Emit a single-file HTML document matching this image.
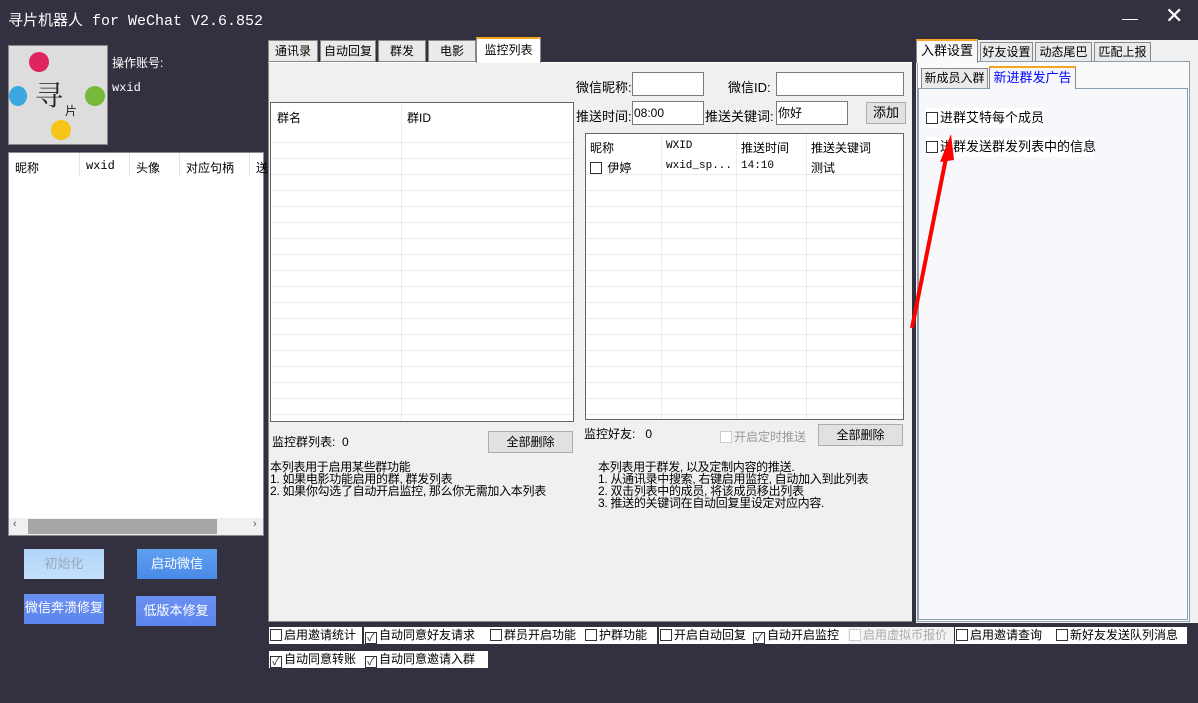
<!DOCTYPE html>
<html><head><meta charset="utf-8">
<style>
*{box-sizing:border-box;margin:0;padding:0}
body{width:1198px;height:703px;background:#33313f;position:relative;overflow:hidden;font-family:"Liberation Sans","Noto Sans CJK SC",sans-serif;font-size:12px;color:#000}
.a{position:absolute;white-space:nowrap}
.w{color:#fff}
.tab{position:absolute;height:22px;border:1px solid #888;background:#eaeaea;font-size:12px;line-height:20px;text-align:center;white-space:nowrap}
.inp{position:absolute;background:#fff;border:1px solid #7a7a7a;font-size:12px;line-height:22px;padding-left:1px}
.btn{position:absolute;background:#e1e1e1;border:1px solid #adadad;text-align:center;font-size:12px}
.cb{display:inline-block;width:12px;height:12px;border:1px solid #333;background:#fff;vertical-align:-2px;margin-right:2px;font-size:11px;line-height:10px;text-align:center;color:#333}
.chk{position:absolute;background:#fff;height:17px;line-height:17px;font-size:12px;padding-left:1px;white-space:nowrap;overflow:hidden}
.row{position:absolute;left:0;right:0;height:1px;background:#ececec}
.blue{position:absolute;color:#fff;text-align:center;font-size:13px;background:linear-gradient(#5fa0f0,#4a8ae8)}
</style></head><body>
<div class="a w" style="left:8px;top:9px;font-size:15px;font-family:'Liberation Mono','Noto Sans CJK SC',monospace">寻片机器人 for WeChat V2.6.852</div>
<div class="a" style="left:1122px;top:19px;width:16px;height:1px;background:#fff"></div>
<div class="a w" style="left:1165px;top:4px;font-size:22px;font-family:'DejaVu Sans'">✕</div>
<div class="a" style="left:8px;top:45px;width:100px;height:100px;background:#ddd;border:1px solid #888;overflow:hidden">
<div class="a" style="left:20px;top:6px;width:20px;height:20px;border-radius:50%;background:#e0245e"></div>
<div class="a" style="left:0;top:40px;width:18px;height:20px;border-radius:50%;background:#3aa7e0"></div>
<div class="a" style="left:76px;top:40px;width:20px;height:20px;border-radius:50%;background:#7ab83a"></div>
<div class="a" style="left:42px;top:74px;width:20px;height:20px;border-radius:50%;background:#f5c518"></div>
<div class="a" style="left:26px;top:28px;font-size:28px;font-family:'Noto Serif CJK SC',serif;color:#222">寻</div>
<div class="a" style="left:56px;top:56px;font-size:12px;color:#222">片</div>
</div>
<div class="a w" style="left:112px;top:54px">操作账号:</div>
<div class="a w" style="left:112px;top:81px;font-family:'Liberation Mono',monospace">wxid</div>
<div class="a" style="left:8px;top:152px;width:256px;height:384px;background:#fff;border:1px solid #888">
<div class="a" style="left:6px;top:6px">昵称</div>
<div class="a" style="left:70px;top:0;width:1px;height:24px;background:#e5e5e5"></div>
<div class="a" style="left:77px;top:6px;font-family:'Liberation Mono',monospace">wxid</div>
<div class="a" style="left:120px;top:0;width:1px;height:24px;background:#e5e5e5"></div>
<div class="a" style="left:127px;top:6px">头像</div>
<div class="a" style="left:170px;top:0;width:1px;height:24px;background:#e5e5e5"></div>
<div class="a" style="left:177px;top:6px">对应句柄</div>
<div class="a" style="left:240px;top:0;width:1px;height:24px;background:#e5e5e5"></div>
<div class="a" style="left:247px;top:6px">送</div>
<div class="a" style="left:0;top:365px;width:254px;height:17px;background:#f0f0f0"></div>
<div class="a" style="left:19px;top:366px;width:189px;height:15px;background:#a6a6a6"></div>
<div class="a" style="left:4px;top:365px;font-size:11px;color:#555">‹</div>
<div class="a" style="left:244px;top:365px;font-size:11px;color:#555">›</div>
</div>
<div class="blue" style="left:24px;top:549px;width:80px;height:30px;line-height:30px;background:linear-gradient(#b0d4f8,#c4e0fc);color:#9aa8b8">初始化</div>
<div class="blue" style="left:137px;top:549px;width:80px;height:30px;line-height:30px">启动微信</div>
<div class="blue" style="left:24px;top:594px;width:80px;height:30px;line-height:28px;background:linear-gradient(#6a90f0,#5c86ee)">微信奔溃修复</div>
<div class="blue" style="left:136px;top:596px;width:80px;height:30px;line-height:30px;background:linear-gradient(#6a90f0,#5c86ee)">低版本修复</div>
<div class="tab" style="left:268px;top:40px;width:50px">通讯录</div>
<div class="tab" style="left:320px;top:40px;width:56px">自动回复</div>
<div class="tab" style="left:378px;top:40px;width:48px">群发</div>
<div class="tab" style="left:428px;top:40px;width:48px">电影</div>
<div class="tab" style="left:476px;top:37px;width:65px;height:26px;background:#fff;border-top:2px solid #f5a623;border-bottom:none;z-index:2;line-height:22px">监控列表</div>
<div class="a" style="left:268px;top:62px;width:645px;height:560px;background:#f0f0f0;border:1px solid #888;border-top-color:#fff"></div>
<div class="a" style="left:576px;top:77px;font-size:13px">微信昵称:</div>
<div class="inp" style="left:632px;top:72px;width:72px;height:24px"></div>
<div class="a" style="left:728px;top:77px;font-size:13px">微信ID:</div>
<div class="inp" style="left:776px;top:72px;width:128px;height:24px"></div>
<div class="a" style="left:576px;top:106px;font-size:13px">推送时间:</div>
<div class="inp" style="left:632px;top:101px;width:72px;height:24px">08:00</div>
<div class="a" style="left:705px;top:106px;font-size:13px">推送关键词:</div>
<div class="inp" style="left:776px;top:101px;width:72px;height:24px">你好</div>
<div class="btn" style="left:866px;top:102px;width:40px;height:22px;line-height:20px;font-size:13px">添加</div>
<div class="a" style="left:270px;top:102px;width:304px;height:320px;background:#fff;border:1px solid #666;overflow:hidden">
<div class="a" style="left:6px;top:6px">群名</div>
<div class="a" style="left:130px;top:0;width:1px;height:320px;background:#ececec"></div>
<div class="a" style="left:136px;top:6px">群ID</div>
<div class="row" style="top:39px"></div><div class="row" style="top:55px"></div><div class="row" style="top:71px"></div><div class="row" style="top:87px"></div><div class="row" style="top:103px"></div><div class="row" style="top:119px"></div><div class="row" style="top:135px"></div><div class="row" style="top:151px"></div><div class="row" style="top:167px"></div><div class="row" style="top:183px"></div><div class="row" style="top:199px"></div><div class="row" style="top:215px"></div><div class="row" style="top:231px"></div><div class="row" style="top:247px"></div><div class="row" style="top:263px"></div><div class="row" style="top:279px"></div><div class="row" style="top:295px"></div><div class="row" style="top:311px"></div>
</div>
<div class="a" style="left:585px;top:133px;width:319px;height:287px;background:#fff;border:1px solid #666;overflow:hidden">
<div class="a" style="left:4px;top:5px;font-size:12px">昵称</div>
<div class="a" style="left:75px;top:0;width:1px;height:287px;background:#ececec"></div>
<div class="a" style="left:80px;top:6px;font-family:'Liberation Mono',monospace;font-size:11px">WXID</div>
<div class="a" style="left:150px;top:0;width:1px;height:287px;background:#ececec"></div>
<div class="a" style="left:155px;top:5px;font-size:12px">推送时间</div>
<div class="a" style="left:220px;top:0;width:1px;height:287px;background:#ececec"></div>
<div class="a" style="left:225px;top:5px;font-size:12px">推送关键词</div>
<div class="a" style="left:4px;top:25px;font-size:12px"><span class="cb"></span> 伊婷</div>
<div class="a" style="left:80px;top:26px;font-family:'Liberation Mono',monospace;font-size:11px">wxid_sp...</div>
<div class="a" style="left:155px;top:26px;font-family:'Liberation Mono',monospace;font-size:11px">14:10</div>
<div class="a" style="left:225px;top:25px;font-size:12px">测试</div>
<div class="row" style="top:40px"></div><div class="row" style="top:56px"></div><div class="row" style="top:72px"></div><div class="row" style="top:88px"></div><div class="row" style="top:104px"></div><div class="row" style="top:120px"></div><div class="row" style="top:136px"></div><div class="row" style="top:152px"></div><div class="row" style="top:168px"></div><div class="row" style="top:184px"></div><div class="row" style="top:200px"></div><div class="row" style="top:216px"></div><div class="row" style="top:232px"></div><div class="row" style="top:248px"></div><div class="row" style="top:264px"></div><div class="row" style="top:280px"></div>
</div>
<div class="a" style="left:272px;top:433px">监控群列表:&nbsp; 0</div>
<div class="btn" style="left:488px;top:431px;width:85px;height:22px;line-height:20px">全部删除</div>
<div class="a" style="left:584px;top:425px">监控好友:&nbsp;&nbsp; 0</div>
<div class="a" style="left:720px;top:428px;color:#999"><span class="cb" style="border-color:#ccc"></span>开启定时推送</div>
<div class="btn" style="left:818px;top:424px;width:85px;height:22px;line-height:20px">全部删除</div>
<div class="a" style="left:270px;top:461px;line-height:12px;font-size:12px;letter-spacing:-0.3px">本列表用于启用某些群功能<br>1. 如果电影功能启用的群, 群发列表<br>2. 如果你勾选了自动开启监控, 那么你无需加入本列表</div>
<div class="a" style="left:598px;top:461px;line-height:12px;font-size:12px;letter-spacing:-0.3px">本列表用于群发, 以及定制内容的推送.<br>1. 从通讯录中搜索, 右键启用监控, 自动加入到此列表<br>2. 双击列表中的成员, 将该成员移出列表<br>3. 推送的关键词在自动回复里设定对应内容.</div>
<div class="a" style="left:916px;top:40px;width:282px;height:583px;background:#f0f0f0"></div>
<div class="tab" style="left:916px;top:39px;width:62px;height:24px;background:#fafafa;border-top:2px solid #f5a623;border-bottom:none;z-index:2;font-size:13px">入群设置</div>
<div class="tab" style="left:980px;top:42px;width:53px;height:20px;line-height:18px">好友设置</div>
<div class="tab" style="left:1035px;top:42px;width:57px;height:20px;line-height:18px">动态尾巴</div>
<div class="tab" style="left:1094px;top:42px;width:57px;height:20px;line-height:18px">匹配上报</div>
<div class="a" style="left:917px;top:61px;width:273px;height:561px;background:#fafafa;border:1px solid #8aa0b0"></div>
<div class="tab" style="left:921px;top:68px;width:67px;height:21px;line-height:19px">新成员入群</div>
<div class="tab" style="left:989px;top:66px;width:87px;height:23px;background:#f8f8fc;border-top:2px solid #f5a623;border-bottom:none;color:#00f;z-index:2;font-size:13px">新进群发广告</div>
<div class="a" style="left:918px;top:88px;width:270px;height:532px;background:#f8f8fc;border:1px solid #8aa0b0"></div>
<div class="a" style="left:926px;top:108px;font-size:13px;background:#fff;width:118px;height:20px;line-height:20px"><span class="cb"></span>进群艾特每个成员</div>
<div class="a" style="left:926px;top:137px;font-size:13px;background:#fff;width:168px;height:20px;line-height:20px"><span class="cb"></span>进群发送群发列表中的信息</div>
<div class="a" style="left:912px;top:40px;width:4px;height:583px;background:#33313f"></div>
<svg class="a" style="left:0;top:0" width="1198" height="703"><line x1="912" y1="328" x2="946" y2="158" stroke="#f00" stroke-width="4"/><polygon points="951,134 940,162 954,160" fill="#f00"/></svg>
<div class="chk" style="left:269px;top:627px;width:93px"><span class="cb"></span>启用邀请统计</div>
<div class="chk" style="left:364px;top:627px;width:125px"><span class="cb">✓</span>自动同意好友请求</div>
<div class="chk" style="left:489px;top:627px;width:95px"><span class="cb"></span>群员开启功能</div>
<div class="chk" style="left:584px;top:627px;width:73px"><span class="cb"></span>护群功能</div>
<div class="chk" style="left:659px;top:627px;width:93px"><span class="cb"></span>开启自动回复</div>
<div class="chk" style="left:752px;top:627px;width:96px"><span class="cb">✓</span>自动开启监控</div>
<div class="chk" style="left:848px;top:627px;width:106px;color:#aaa;background:#f4f4f4"><span class="cb" style="border-color:#ccc"></span>启用虚拟币报价</div>
<div class="chk" style="left:955px;top:627px;width:100px"><span class="cb"></span>启用邀请查询</div>
<div class="chk" style="left:1055px;top:627px;width:132px"><span class="cb"></span>新好友发送队列消息</div>
<div class="chk" style="left:269px;top:651px;width:95px"><span class="cb">✓</span>自动同意转账</div>
<div class="chk" style="left:364px;top:651px;width:124px"><span class="cb">✓</span>自动同意邀请入群</div>
</body></html>
